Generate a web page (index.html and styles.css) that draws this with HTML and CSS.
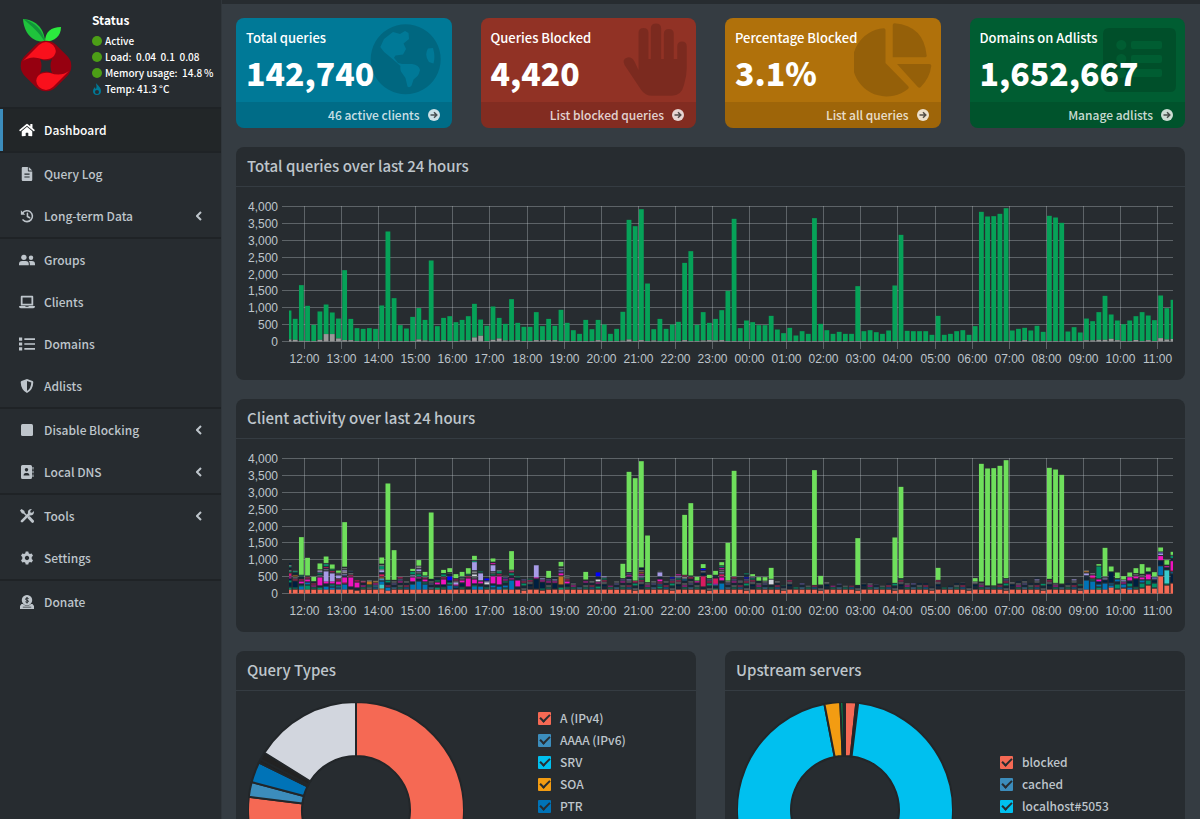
FILE: index.html
```html
<!DOCTYPE html>
<html lang="en">
<head>
    <meta charset="UTF-8">
    <meta name="viewport" content="width=device-width, initial-scale=1.0">
    <title>Pi-hole Dashboard</title>
    <link rel="stylesheet" href="styles.css">
</head>
<body>
    <aside class="sidebar">
        <div class="user-panel">
            <svg class="logo" viewBox="0 0 52 74" aria-hidden="true">
                <path fill="#1fc43c" d="M3 1 C14 2 24 8 25 24 C12 24 4 15 3 1z"/>
                <path fill="#12933a" d="M3 1 C12 8 19 14 25 24 C23 12 15 4 3 1z"/>
                <path fill="#2bea3e" d="M41 9 C31 9 25 14 25 24 C35 23 41 18 41 9z"/>
                <rect x="4" y="26" width="44" height="44" rx="14" transform="rotate(45 26 48)" fill="#960010"/>
                <path fill="#f9101c" d="M3 43 L19 27 Q26 21 33 27 Q38 33 34 38 Q30 42 22 41 Q11 37 3 43z"/>
                <path fill="#f9101c" d="M49 53 L33 69 Q26 75 19 69 Q14 63 18 58 Q22 54 30 55 Q41 59 49 53z"/>
                <path fill="#272c30" d="M20 41 Q26 44 32 41 Q29 48 32 55 Q26 52 20 55 Q23 48 20 41z"/>
            </svg>
            <div class="status">
                <p class="status-title">Status</p>
                <p><i class="dot"></i>Active</p>
                <p><i class="dot"></i>Load:&nbsp; 0.04&nbsp; 0.1&nbsp; 0.08</p>
                <p><i class="dot"></i>Memory usage:&nbsp; 14.8&thinsp;%</p>
                <p><svg class="flame" viewBox="0 0 10 12" aria-hidden="true"><path fill="#007997" d="M4 0 C5 2 9 4 9 8 Q9 12 5 12 Q1 12 1 8 Q1 6 3 4 Q3 6 4 6 Q5 4 4 0z"/><circle cx="5" cy="9" r="2" fill="#272c30"/></svg>Temp: 41.3&thinsp;&deg;C</p>
            </div>
        </div>

        <nav class="menu">
            <ul>
                <li><a class="active" href="#"><svg class="icon" viewBox="0 0 576 512"><path d="M280.37 148.26L96 300.11V464a16 16 0 0 0 16 16l112.06-.29a16 16 0 0 0 15.92-16V368a16 16 0 0 1 16-16h64a16 16 0 0 1 16 16v95.64a16 16 0 0 0 16 16.05L464 480a16 16 0 0 0 16-16V300L295.67 148.26a12.19 12.19 0 0 0-15.3 0zM571.6 251.47L488 182.56V44.05a12 12 0 0 0-12-12h-56a12 12 0 0 0-12 12v72.61L318.47 43a48 48 0 0 0-61 0L4.34 251.47a12 12 0 0 0-1.6 16.9l25.5 31A12 12 0 0 0 45.15 301l235.22-193.74a12.19 12.19 0 0 1 15.3 0L530.9 301a12 12 0 0 0 16.9-1.6l25.5-31a12 12 0 0 0-1.7-16.93z"/></svg>Dashboard</a></li>
            </ul>
            <ul>
                <li><a href="#"><svg class="icon" viewBox="0 0 384 512"><path d="M224 136V0H48C20 0 0 20 0 48v416c0 28 20 48 48 48h288c28 0 48-20 48-48V160H248c-13 0-24-11-24-24zm64 236c0 7-5 12-12 12H108c-7 0-12-5-12-12v-16c0-7 5-12 12-12h168c7 0 12 5 12 12zm0-120v16c0 7-5 12-12 12H108c-7 0-12-5-12-12v-16c0-7 5-12 12-12h168c7 0 12 5 12 12zM384 128H256V0z"/></svg>Query Log</a></li>
                <li><a href="#"><svg class="icon line" viewBox="0 0 16 16"><path d="M3 4.500 A6.200 6.200 0 1 1 3.500 12.500M8.500 5v3.500l2.500 1.500" stroke-width="1.800"/><path class="solid" d="M1 1.500v5h5z"/></svg>Long-term Data<svg class="arrow" viewBox="0 0 6 10"><path d="M5 1L1 5l4 4"/></svg></a></li>
            </ul>
            <ul>
                <li><a href="#"><svg class="icon wide" viewBox="0 0 18 14"><circle cx="5.500" cy="4" r="3"/><circle cx="13.500" cy="4.500" r="2.500"/><path d="M0 13v-1.500Q0 8 3.500 8h4Q11 8 11 11.500V13zM12.200 13v-1.500q0-2-1.200-3.300h3.500Q18 8.200 18 11.500V13z"/></svg>Groups</a></li>
                <li><a href="#"><svg class="icon wide" viewBox="0 0 18 14"><path fill-rule="evenodd" d="M3 0h12q1 0 1 1v10H2V1q0-1 1-1zm1 2v7h10V2zM0 11.500h7l.5.8h3l.5-.8h7q0 2.500-2 2.500H2q-2 0-2-2.500z"/></svg>Clients</a></li>
                <li><a href="#"><svg class="icon" viewBox="0 0 15 13"><path d="M0 .5h3v3H0zM0 5h3v3H0zM0 9.500h3v3H0zM5 1.200h10v1.600H5zM5 5.700h10v1.600H5zM5 10.200h10v1.600H5z"/></svg>Domains</a></li>
                <li><a href="#"><svg class="icon" viewBox="0 0 14 14"><path fill-rule="evenodd" d="M7 0l5.500 2q.8.400.8 1.200Q13 11 7 14 1 11 .7 3.200.7 2.400 1.500 2zm0 2v10q4-2.300 4.300-8.500z"/></svg>Adlists</a></li>
            </ul>
            <ul>
                <li><a href="#"><svg class="icon" viewBox="0 0 14 14"><rect x="1" y="1" width="12" height="12" rx="1.500"/></svg>Disable Blocking<svg class="arrow" viewBox="0 0 6 10"><path d="M5 1L1 5l4 4"/></svg></a></li>
                <li><a href="#"><svg class="icon" viewBox="0 0 14 14"><path fill-rule="evenodd" d="M2.500 0h8Q12 0 12 1.500v11q0 1.500-1.500 1.500h-8Q1 14 1 12.500v-11Q1 0 2.500 0zM6.500 3a1.700 1.700 0 1 0 .01 0zM3.500 10.500h6q0-2.500-2-2.500h-2q-2 0-2 2.500zM12.500 2h1v2.500h-1zM12.500 5.700h1v2.500h-1zM12.500 9.500h1V12h-1z"/></svg>Local DNS<svg class="arrow" viewBox="0 0 6 10"><path d="M5 1L1 5l4 4"/></svg></a></li>
            </ul>
            <ul>
                <li><a href="#"><svg class="icon line" viewBox="0 0 14 14"><path d="M2 12.200L9 5.200" stroke-width="2.600"/><path d="M9 8.500l3.500 3.800" stroke-width="3"/><path d="M2 2l5 5" stroke-width="1.500"/><path class="solid" d="M0 1.500L1.500 0l3 2v2.500H2zM8 5q-1-5 4-5L10.200 2l.3 1.500 1.500.3 2-1.800q.3 5-5 4.500z"/></svg>Tools<svg class="arrow" viewBox="0 0 6 10"><path d="M5 1L1 5l4 4"/></svg></a></li>
                <li><a href="#"><svg class="icon" viewBox="0 0 14 14"><path fill-rule="evenodd" d="M5.700.5h2.600l.4 1.800 1.200.7 1.800-.6L13 4.700 11.700 6v2l1.300 1.300-1.300 2.300-1.800-.6-1.200.7-.4 1.800H5.700l-.4-1.800-1.200-.7-1.800.6L1 9.300 2.300 8V6L1 4.700l1.300-2.300 1.800.6 1.200-.7zM7 4.800a2.200 2.200 0 1 0 .01 0z"/></svg>Settings</a></li>
            </ul>
            <ul>
                <li><a href="#"><svg class="icon" viewBox="0 0 14 14"><path fill-rule="evenodd" d="M7 0a5.200 5.200 0 1 1-.01 0zM1.500 9H3q4 4 8 0h1.500L14 11v3H0v-3zm1.300 2.800v.7h8.400v-.7z"/><path class="cut" d="M8.600 3.600Q7 2.600 5.800 3.500 5 4.800 7 5.200 9 5.600 8.200 6.900 7 7.800 5.400 6.800M7 2v6.500"/></svg>Donate</a></li>
            </ul>
        </nav>
    </aside>

    <main class="content">
        <section class="cards">
            <div class="card aqua">
                <div class="inner"><p>Total queries</p><h3>142,740</h3></div>
                <svg class="card-icon" viewBox="0 0 78 74"><path fill-rule="evenodd" d="M40.700 1.300a35 35 0 1 1-.01 0zM15.300 24L19 16 28 9l7 2 5-3 3.500 2 .5 6-5.500 4.500 2.500 5.500-3 5.500-7.500 1-1.500 2.300 4 5.200 4 1h10q7 1 8 6-1 4-2.500 6l-4 3.500-2 6q-2 3-4 1l-2-8.500-4.500-6.500q-1-3-.5-5.500L31 39l-7-6q-5-3-8.700-9zM68 25l-5 .5q-4 6.500 1 13.500l4.500 1.500q2-7-.5-15.500z"/></svg>
                <a class="card-footer" href="#">46 active clients<svg viewBox="0 0 12 12"><circle cx="6" cy="6" r="6"/><path d="M2.500 6h6M6 3.200L8.800 6 6 8.800"/></svg></a>
            </div>
            <div class="card red">
                <div class="inner"><p>Queries Blocked</p><h3>4,420</h3></div>
                <svg class="card-icon" viewBox="0 0 78 74"><path d="M29.500 47V10q0-5 5-5t5 5v26h2.300V5.500q0-5 5.200-5t5.200 5V36h2.600V11q0-5 5-5t5 5v25h3.400V23.500q0-5 4.800-5t4.800 5V45q0 8-2.800 17-2.500 10.700-12 10.700H43q-7 0-11-6L15.500 42q-3-6 3-7.500 4-1 7 4z"/></svg>
                <a class="card-footer" href="#">List blocked queries<svg viewBox="0 0 12 12"><circle cx="6" cy="6" r="6"/><path d="M2.500 6h6M6 3.200L8.800 6 6 8.800"/></svg></a>
            </div>
            <div class="card yellow">
                <div class="inner"><p>Percentage Blocked</p><h3>3.1%</h3></div>
                <svg class="card-icon" viewBox="0 0 78 74"><path d="M31.500 7q0-2-2-1.800A34.200 34.200 0 1 0 54 66q1.500-1.500 0-3L31.500 40zM38.700 2q0-1.800 2-1.700Q70 3 72.700 32.500q.1 1.800-1.700 1.800H38.700zM43 41h32.500q2 0 1.800 2-1.500 12-10.500 21-1.500 1.300-3 0z"/></svg>
                <a class="card-footer" href="#">List all queries<svg viewBox="0 0 12 12"><circle cx="6" cy="6" r="6"/><path d="M2.500 6h6M6 3.200L8.800 6 6 8.800"/></svg></a>
            </div>
            <div class="card green">
                <div class="inner"><p>Domains on Adlists</p><h3>1,652,667</h3></div>
                <svg class="card-icon" viewBox="0 0 78 74"><path fill-rule="evenodd" d="M11 5h61q6 0 6 6v52q0 6-6 6H11q-6 0-6-6V11q0-6 6-6zm12.300 12a5 5 0 1 0 .01 0zm0 14a5 5 0 1 0 .01 0zm0 14a5 5 0 1 0 .01 0zM35 18q-2 0-2 2v4q0 2 2 2h27q2 0 2-2v-4q0-2-2-2zm0 14q-2 0-2 2v4q0 2 2 2h27q2 0 2-2v-4q0-2-2-2zm0 14q-2 0-2 2v4q0 2 2 2h27q2 0 2-2v-4q0-2-2-2z"/></svg>
                <a class="card-footer" href="#">Manage adlists<svg viewBox="0 0 12 12"><circle cx="6" cy="6" r="6"/><path d="M2.500 6h6M6 3.200L8.800 6 6 8.800"/></svg></a>
            </div>
        </section>

        <section class="box">
            <h2>Total queries over last 24 hours</h2>
            <div class="chart" id="queries"></div>
        </section>

        <section class="box">
            <h2>Client activity over last 24 hours</h2>
            <div class="chart" id="clients"></div>
        </section>

        <div class="split">
            <section class="box">
                <h2>Query Types</h2>
                <div class="pie-row">
                    <svg class="pie" id="types" viewBox="0 0 216 216"></svg>
                    <ul class="legend types">
                        <li><label><input type="checkbox" class="c-red" checked>A (IPv4)</label></li>
                        <li><label><input type="checkbox" class="c-blue" checked>AAAA (IPv6)</label></li>
                        <li><label><input type="checkbox" class="c-aqua" checked>SRV</label></li>
                        <li><label><input type="checkbox" class="c-orange" checked>SOA</label></li>
                        <li><label><input type="checkbox" class="c-navy" checked>PTR</label></li>
                    </ul>
                </div>
            </section>
            <section class="box">
                <h2>Upstream servers</h2>
                <div class="pie-row">
                    <svg class="pie" id="upstreams" viewBox="0 0 216 216"></svg>
                    <ul class="legend upstreams">
                        <li><label><input type="checkbox" class="c-red" checked>blocked</label></li>
                        <li><label><input type="checkbox" class="c-blue" checked>cached</label></li>
                        <li><label><input type="checkbox" class="c-aqua" checked>localhost#5053</label></li>
                    </ul>
                </div>
            </section>
        </div>
    </main>

    <script src="script.js"></script>
</body>
</html>
```

FILE: styles.css
```css
* {
    box-sizing: border-box;
    margin: 0;
    padding: 0;
}

body {
    background-color: #353c42;
    color: #bec5cb;
    display: flex;
    height: 100vh;
    overflow: hidden;
    font-family: "Source Sans Pro", "Noto Sans CJK SC", sans-serif;
    font-size: 12px;
    font-weight: 500;
    line-height: 16px;
}

ul {
    list-style: none;
}

a {
    color: inherit;
    text-decoration: none;
}

.sidebar {
    background-color: #272c30;
    flex: none;
    width: 222px;
    border-right: 1px solid #30363b;
}

.user-panel {
    display: flex;
    height: 109px;
    padding: 12px 0 0 20px;
    border-bottom: 2px solid #1f2326;
}

.logo {
    width: 52px;
    height: 74px;
    margin: 6px 20px 0 0;
}

.status {
    color: #fff;
    font-size: 10px;
    white-space: nowrap;
}

.status p {
    display: flex;
    align-items: center;
}

.status .status-title {
    font-size: 12px;
    font-weight: bold;
    margin-bottom: 5px;
}

.dot {
    width: 10px;
    height: 10px;
    margin-right: 3px;
    border-radius: 50%;
    background-color: #4c9e16;
}

.flame {
    width: 10px;
    height: 12px;
    margin-right: 3px;
}

.menu ul {
    border-bottom: 2px solid #1f2326;
}

.menu ul:last-child {
    border-bottom: 0;
}

.menu a {
    display: flex;
    align-items: center;
    height: 42px;
    padding: 0 19px 0 16px;
    border-left: 3px solid transparent;
}

.menu a.active {
    background-color: #222628;
    border-left-color: #3c8dbc;
    color: #fff;
}

.icon {
    width: 16px;
    height: 14px;
    margin-right: 9px;
    fill: currentColor;
}

.icon.line {
    fill: none;
    stroke: currentColor;
    stroke-linecap: round;
}

.icon .solid {
    fill: currentColor;
    stroke: none;
}

.icon .cut {
    fill: none;
    stroke: #272c30;
}

.arrow {
    width: 6px;
    height: 10px;
    margin-left: auto;
    fill: none;
    stroke: currentColor;
    stroke-width: 2;
}

.content {
    flex: 1;
    display: flex;
    flex-direction: column;
    gap: 19px;
    min-width: 0;
    padding: 14px 15px 14px 14px;
    border-top: 4px solid #272c30;
    overflow: hidden;
}

.content > * {
    flex: none;
}

.cards {
    display: grid;
    grid-template-columns: repeat(4, 1fr);
    gap: 29px;
}

.card {
    position: relative;
    border-radius: 8px;
    overflow: hidden;
    color: #fff;
}

.card.aqua {
    background-color: #007997;
}

.card.red {
    background-color: #913225;
}

.card.yellow {
    background-color: #b0710b;
}

.card.green {
    background-color: #005d32;
}

.inner {
    position: relative;
    z-index: 1;
    height: 84px;
    padding: 12px 10px 0;
}

.inner p {
    font-size: 13px;
}

.inner h3 {
    font-size: 32px;
    font-weight: 900;
    line-height: 40px;
    margin-top: 6px;
}

.card-icon {
    position: absolute;
    top: 5px;
    right: 9px;
    width: 78px;
    height: 74px;
    fill: rgba(0, 0, 0, 0.15);
}

.card-footer {
    display: flex;
    align-items: center;
    justify-content: flex-end;
    gap: 8px;
    height: 26px;
    padding-right: 12px;
    background-color: rgba(0, 0, 0, 0.1);
    color: rgba(255, 255, 255, 0.8);
    font-size: 12px;
}

.card-footer svg {
    width: 12px;
    height: 12px;
    fill: currentColor;
}

.card-footer path {
    fill: none;
    stroke: rgba(0, 0, 0, 0.65);
    stroke-width: 1.5;
}

.box {
    background-color: #272c30;
    border-radius: 8px;
}

.box h2 {
    height: 40px;
    padding: 0 11px;
    border-bottom: 1px solid #353c42;
    font-size: 15px;
    font-weight: 500;
    line-height: 37px;
}

.chart {
    height: 193px;
    padding: 0 12px;
}

.chart svg {
    display: block;
}

.chart text {
    fill: #bec5cb;
    font-family: "Liberation Sans", Arial, sans-serif;
    font-size: 12px;
}

.chart .grid {
    stroke: rgba(200, 205, 210, 0.34);
    shape-rendering: crispEdges;
}

.split {
    display: grid;
    grid-template-columns: 1fr 1fr;
    gap: 29px;
}

.pie-row {
    display: flex;
    padding: 11px 12px;
}

.pie {
    flex: none;
    width: 216px;
    height: 216px;
}

.pie path {
    stroke: #222629;
    stroke-width: 2;
}

.legend {
    font-size: 12px;
    line-height: 22px;
    padding-top: 5px;
}

.legend.types {
    margin-left: 74px;
}

.legend.upstreams {
    margin: 44px 0 0 47px;
}

.legend label {
    display: flex;
    align-items: center;
    gap: 9px;
}

.legend input {
    appearance: none;
    display: grid;
    place-items: center;
    width: 13px;
    height: 13px;
    border-radius: 1px;
}

.legend input:checked::after {
    content: "";
    width: 8px;
    height: 4px;
    margin-bottom: 3px;
    border: solid #272c30;
    border-width: 0 0 2px 2px;
    transform: rotate(-45deg);
}

.c-red {
    background-color: #f56954;
}

.c-blue {
    background-color: #3c8dbc;
}

.c-aqua {
    background-color: #00c0ef;
}

.c-orange {
    background-color: #f39c12;
}

.c-navy {
    background-color: #0073b7;
}
```

FILE: script.js
```js
// Queries per 10 minute slot, 11:35 to 11:25
const totals = [
    918, 672, 1670, 1057, 494, 890, 1096, 860, 680, 2114, 670, 395, 375, 395, 375, 1067, 3260, 1284,
    485, 385, 730, 990, 640, 2400, 455, 700, 750, 573, 640, 750, 1116, 650, 465, 1037, 700, 523,
    1255, 553, 435, 435, 870, 455, 670, 465, 938, 553, 335, 227, 640, 365, 640, 504, 227, 375,
    880, 3605, 3417, 3920, 1718, 365, 670, 375, 504, 583, 2330, 2677, 494, 870, 553, 670, 928, 1501,
    3635, 395, 622, 573, 484, 484, 760, 355, 247, 405, 178, 306, 227, 3655, 523, 335, 227, 286,
    227, 227, 1640, 306, 335, 276, 227, 326, 1660, 3160, 316, 306, 306, 306, 198, 760, 198, 227,
    306, 335, 198, 455, 3842, 3704, 3714, 3783, 3950, 326, 375, 405, 326, 465, 286, 3724, 3674, 3516,
    296, 425, 267, 680, 602, 870, 1353, 800, 622, 513, 622, 750, 870, 770, 632, 1363, 988, 1235
];

const blocked = {
    0: 60, 1: 50, 2: 20, 5: 50, 6: 220, 7: 220, 8: 90, 9: 40, 10: 40, 21: 60, 22: 30, 25: 35, 28: 35,
    29: 35, 30: 120, 31: 170, 33: 50, 34: 90, 35: 30, 36: 30, 37: 40, 40: 40, 41: 40, 42: 40, 43: 40,
    50: 40, 54: 25, 55: 60, 57: 40, 59: 30, 64: 40, 67: 30, 68: 40, 69: 30, 70: 40, 119: 40, 129: 35,
    130: 35, 131: 50, 132: 50, 133: 80, 134: 40, 137: 45, 139: 40, 141: 100, 142: 60, 143: 75
};

// Queries of all other clients in the slots where the busiest client shows on top
const others = {
    2: 530, 3: 510, 4: 340, 5: 690, 6: 880, 7: 710, 8: 590, 9: 770, 15: 860, 16: 380, 17: 380, 20: 640,
    21: 800, 22: 510, 23: 410, 25: 580, 26: 610, 27: 430, 28: 490, 29: 560, 30: 970, 33: 920, 36: 680,
    42: 440, 44: 780, 48: 390, 54: 430, 55: 610, 56: 360, 57: 750, 58: 310, 64: 530, 65: 510, 66: 360,
    67: 730, 68: 430, 69: 530, 70: 810, 71: 360, 72: 490, 75: 490, 76: 355, 77: 355, 78: 410, 85: 230,
    86: 240, 92: 230, 98: 290, 99: 430, 105: 380, 111: 330, 112: 330, 113: 215, 114: 215, 115: 270,
    116: 430, 123: 410, 124: 290, 125: 270, 131: 800, 132: 490, 133: 630, 134: 430, 135: 390, 136: 480,
    137: 580, 138: 560, 139: 630, 140: 480, 141: 1220, 142: 830, 143: 1120
};

const colors = {
    s: '#f56954', b: '#0073b7', u: '#3c8dbc', t: '#008f67', c: '#39cccc', k: '#001f3f', m: '#f012be',
    l: '#a79be6', g: '#85878b', i: '#0000ff', p: '#605ca8', n: '#d81b60', o: '#c7741e', w: '#d2d6de',
    e: '#00a65a', '.': '#272c30'
};

// Client mixes from the bottom up, one letter is about 30 queries
const mixes = {
    0: 'sssstt.kkkkttkkm.mnn', 1: 'ssss.tkkkkkk.n.g.o', 2: 'ssssbbbtk.mm.n.k.tk', 3: 'sssstttt.bb.mm.n.gg',
    4: 'ssss.t.m.n.kt', 5: 'sssstt.kmmmmmmmm.gkt.lg', 6: 'ssssbbb.k.mmllllllllll.gkn.ttg', 7: 'ssssbb.bt.mmllllllll.n.e',
    8: 'ssssb.bt.mmm.n.lll.g', 9: 'ssssbbbbb.nmmmmm.kl.ggl.g', 10: 'ssss.k.mmmmmmmmm.n.g.k', 11: 'sss.k.mmmmm.n',
    12: 'ssss.t.m.k.n', 13: 'ssss.g.t.ooo', 14: 'ssss.b.u.m.o', 15: 'ssssoccccbbb.uuo.nn.kllgtt', 16: 'sssbbb.n.k.tt',
    20: 'ssssbbbbb.k.mmmm.l.tt', 21: 'ssssbbbbbbbb.k.m.tt.g.ll.gg', 22: 'ssssbbbbb.t.mm.n',
    24: 'sssstt.k.mm.e.k', 25: 'ssss.t.kkmmmmm.n.tt', 26: 'ssssbbbb.ttkkiiii.k.g', 27: 'ssss.kb.mllg.n', 28: 'ssss.t.kkk.mm.g.',
    29: 'ssss.k.mmmmmmmm.n.t', 30: 'ssssbbbt.kmmmm.g.ww.gg.llllllll', 31: 'ssssbbb.k.mm.lllllll', 32: 'ssss.t.k.wwl.ii',
    33: 'ssssb.bbk.mmmmmmm.t.g.llllll.m', 34: 'ssssbbbk.mmmmmmmm.n.t', 35: 'sssst.bb.k.t.mkp.', 36: 'ssssbbbbbbbbb.m.k.tt.n',
    37: 'ssss.k.mmmmmm.k.t.', 40: 'ssss.kkkkkkkkk.mllllllllllll', 41: 'sss.tkkkkkk.m.l', 43: 'ssss.kkkkk.m.l.k', 44: 'sssstt.k.oooooooo.mm.pp.g',
    45: 'ssss.t.kk.mm.n.g.g', 50: 'ssss.tt.k.m.ww.k.iiii.p', 60: 'ssss.tt.b.n.mm.k.llll.g', 67: 'ssss.k.nnnnnnnnnn.kk.g.ii.', 69: 'sssst.k.bmnnnnn.k.p',
    70: 'ssssbbbbbb.k.mmm.nn.l.g.m', 78: 'ssss.t.k.wwwwww', 129: 'ssssbbbbbbbbb.k.k.ll.o', 130: 'ssssbbbbbbbb.t.nmm.g', 131: 'sssstt.bb.kkmm.ttttttttttt',
    132: 'ssssbbbbbb.kk.l.g', 133: 'ssssssbb.b.kkkkkkkkkk', 134: 'ssss.tttt.k.bb.k', 135: 'sssss.bbb.m.l', 136: 'ssssbb.tttkk.mmm.', 137: 'ssss.t.kkkkkkk.mm.g.',
    138: 'sssss.tttt.bb.mm.g.l', 139: 'ssssssss.tttt.mmmmm.k.', 140: 'sssss.tttt.kk.pp.', 141: 'sssssssssssssssss.bbbbbbbbb.kkkk.mmmm.lpp.tt', 142: 'ssssssss.tccccccccccccc.k.m.l', 143: 'ssssssssss.kkkkkkkk.b.nmmmmmmmmm.k.t'
};

const fallback = [
    'ssss.t.g.k.m.p.n.t.g.', 'ssss.b.n.k.g.l.k.m.p.', 'sss.g.k.tt.n.p.i.k.t.', 'ssss.k.kk.g.n.t.l.m.o.',
    'ssss.t.m.g.k.b.w.n.p.', 'ssss.u.k.p.g.k.n.m.i.'
];

const svgNS = 'http://www.w3.org/2000/svg';

function add(parent, name, attrs, text) {
    const el = document.createElementNS(svgNS, name);
    for (const key in attrs) {
        el.setAttribute(key, attrs[key]);
    }
    if (text) {
        el.textContent = text;
    }
    parent.appendChild(el);
    return el;
}

function drawChart(id, drawBar) {
    const holder = document.getElementById(id);
    holder.textContent = '';
    const width = holder.clientWidth - 24;
    const svg = add(holder, 'svg', { width: width, height: 193 });
    const left = 41, top = 19, bottom = 154;
    const step = (width - left) / (totals.length - 1);
    const yOf = v => bottom - v * (bottom - top) / 4000;

    for (let v = 0; v <= 4000; v += 500) {
        const y = Math.round(yOf(v)) + 0.5;
        add(svg, 'line', { class: 'grid', x1: 34, x2: width, y1: y, y2: y });
        add(svg, 'text', { x: 30, y: y + 4, 'text-anchor': 'end' }, v.toLocaleString('en-US'));
    }
    for (let h = 0; h < 24; h++) {
        const x = Math.floor(left + step * (2.5 + h * 6)) + 0.5;
        add(svg, 'line', { class: 'grid', x1: x, x2: x, y1: top, y2: bottom + 8 });
        add(svg, 'text', { x: x, y: 176, 'text-anchor': 'middle' }, String((h + 12) % 24).padStart(2, '0') + ':00');
    }

    totals.forEach((total, i) => {
        const x = Math.max(left, left + step * i - 2.4);
        const end = Math.min(width, left + step * i + 2.4);
        drawBar(i, total, (from, to, color) => {
            add(svg, 'rect', { x: x, width: end - x, y: yOf(to) + 0.5, height: yOf(from) - yOf(to), fill: color });
        });
    });
}

function drawCharts() {
    drawChart('queries', (i, total, bar) => {
        const low = blocked[i] || 15;
        bar(low, total, '#06a258');
        bar(0, low, '#999');
    });

    drawChart('clients', (i, total, bar) => {
        const base = others[i] || total;
        const mix = mixes[i] || fallback[i % fallback.length];
        const letter = k => mix[k] || '.tg.k'[k % 5];
        if (total > base) {
            bar(base + 25, total, '#6fdf5c');
        }
        // equal neighbours are drawn as one block
        let start = 0;
        for (let k = 1; start * 30 < base; k++) {
            if (k * 30 >= base || letter(k) !== letter(start)) {
                bar(start * 30, Math.min(base, k * 30), colors[letter(start)]);
                start = k;
            }
        }
        bar(0, 12, '#d0432f');
    });
}

function drawPie(id, slices) {
    const svg = document.getElementById(id);
    const point = (r, deg) => {
        const a = deg * Math.PI / 180;
        return (108 + r * Math.sin(a)) + ' ' + (108 - r * Math.cos(a));
    };
    slices.forEach(([from, to, color]) => {
        const large = to - from > 180 ? 1 : 0;
        add(svg, 'path', {
            fill: color,
            d: `M${point(108, from)} A108 108 0 ${large} 1 ${point(108, to)} L${point(54, to)} A54 54 0 ${large} 0 ${point(54, from)}z`
        });
    });
}

drawCharts();
window.addEventListener('resize', drawCharts);

drawPie('types', [
    [0, 277, '#f56954'], [277, 285, '#3c8dbc'], [285, 296, '#0073b7'],
    [296, 298, '#222'], [298, 302, '#222'], [302, 360, '#d2d6de']
]);
drawPie('upstreams', [
    [0, 6, '#f56954'], [6, 7, '#3c8dbc'], [7, 349, '#00c0ef'], [349, 357.5, '#f39c12'],
    [357.5, 359.2, '#00a65a'], [359.2, 360, '#222']
]);
```
